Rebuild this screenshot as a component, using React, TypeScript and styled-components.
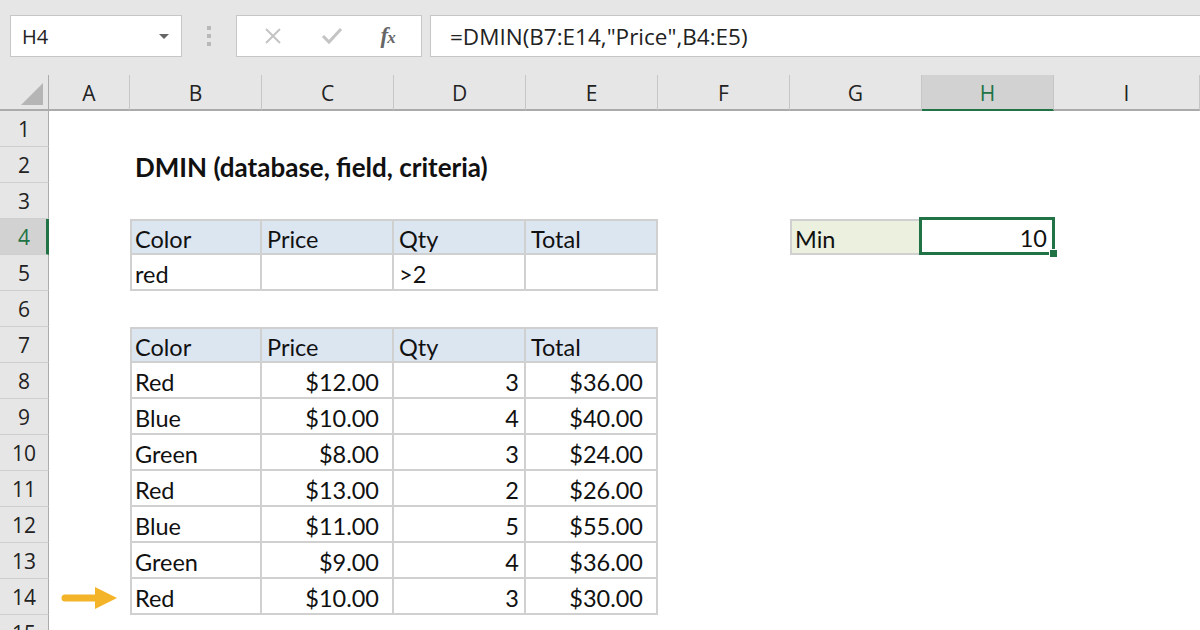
import React from 'react';
import styled, { createGlobalStyle } from 'styled-components';

const GlobalStyle = createGlobalStyle`
  html, body {
    margin: 0;
    padding: 0;
    width: 1200px;
    height: 630px;
    overflow: hidden;
    background: #e6e6e6;
  }
`;

const GREEN = '#217346';
const UI_FONT = '"Open Sans", "Noto Sans", sans-serif';
const CELL_FONT = 'Lato, "Open Sans", sans-serif';

const Page = styled.div`
  width: 1200px;
  height: 630px;
  display: flex;
  flex-direction: column;
  background: #e6e6e6;
  overflow: hidden;
`;

const Toolbar = styled.div`
  flex-shrink: 0;
  height: 75px;
  box-sizing: border-box;
  padding: 15px 0 0 10px;
  display: flex;
  align-items: flex-start;
`;

const Box = styled.div<{ $w?: number }>`
  height: 42px;
  box-sizing: border-box;
  background: #fff;
  border: 1px solid #c6c6c6;
  display: flex;
  align-items: center;
  ${(p) => (p.$w ? `width: ${p.$w}px;` : 'flex: 1;')}
`;

const NameBox = styled(Box)`
  justify-content: space-between;
  padding: 0 12px 0 11px;
  font-family: ${UI_FONT};
  font-size: 20px;
  color: #222;
`;

const Caret = styled.span`
  width: 0;
  height: 0;
  border-left: 5px solid transparent;
  border-right: 5px solid transparent;
  border-top: 5px solid #666;
`;

const Grip = styled.div`
  width: 54px;
  height: 42px;
  display: flex;
  flex-direction: column;
  align-items: center;
  justify-content: center;
  gap: 4px;
  & > i {
    width: 4px;
    height: 4px;
    background: #b9b9b9;
  }
`;

const FxBox = styled(Box)`
  justify-content: space-around;
  padding: 0 8px;
  margin-right: 8px;
`;

const FxLabel = styled.span`
  font-family: "Liberation Serif", serif;
  font-style: italic;
  font-weight: bold;
  font-size: 23px;
  color: #666;
  letter-spacing: -1px;
  & > small {
    font-size: 17px;
  }
`;

const FormulaBox = styled(Box)`
  border-right: none;
  padding-left: 19px;
  font-family: ${UI_FONT};
  font-size: 22.5px;
  color: #222;
`;

const Sheet = styled.div`
  flex: 1;
  min-height: 0;
  display: grid;
  grid-template-columns: 49px 81px repeat(7, 132px) 1fr;
  grid-template-rows: 36px;
  grid-auto-rows: 36px;
  background: #fff;
`;

const Corner = styled.div`
  background: #e6e6e6;
  border-right: 1px solid #ababab;
  border-bottom: 2px solid #ababab;
  box-sizing: border-box;
  display: flex;
  align-items: flex-end;
  justify-content: flex-end;
  padding: 0 5px 4px 0;
`;

const Triangle = styled.span`
  width: 0;
  height: 0;
  border-left: 22px solid transparent;
  border-bottom: 22px solid #b5b5b5;
`;

const ColHead = styled.div<{ $sel?: boolean }>`
  box-sizing: border-box;
  background: ${(p) => (p.$sel ? '#d2d2d2' : '#e6e6e6')};
  border-right: 1px solid #c6c6c6;
  border-bottom: 2px solid ${(p) => (p.$sel ? GREEN : '#ababab')};
  display: flex;
  align-items: center;
  justify-content: center;
  padding-top: 2px;
  font-family: ${UI_FONT};
  font-size: 21px;
  color: ${(p) => (p.$sel ? GREEN : '#222')};
`;

const RowHead = styled.div<{ $sel?: boolean }>`
  box-sizing: border-box;
  background: ${(p) => (p.$sel ? '#d2d2d2' : '#e6e6e6')};
  border-bottom: 1px solid #cfcfcf;
  border-right: ${(p) => (p.$sel ? `3px solid ${GREEN}` : '1px solid #ababab')};
  display: flex;
  align-items: center;
  justify-content: center;
  padding-left: ${(p) => (p.$sel ? '2px' : '0')};
  font-family: ${UI_FONT};
  font-size: 21px;
  color: ${(p) => (p.$sel ? GREEN : '#222')};
`;

type Kind = 'plain' | 'title' | 'head' | 'body' | 'money' | 'num' | 'label' | 'active';

type CellSpec = { v?: string; k?: Kind; top?: boolean; left?: boolean; arrow?: boolean };

const fills: Record<string, string> = {
  head: '#dce6f1',
  label: '#ebf1de',
};

const Cell = styled.div<{ $k: Kind; $top?: boolean; $left?: boolean }>`
  position: relative;
  box-sizing: border-box;
  display: flex;
  align-items: center;
  padding-top: 3px;
  white-space: nowrap;
  overflow: visible;
  font-family: ${CELL_FONT};
  font-size: 23.5px;
  color: #111;
  background: ${(p) => fills[p.$k] || 'transparent'};
  justify-content: ${(p) => (p.$k === 'money' || p.$k === 'num' || p.$k === 'active' ? 'flex-end' : 'flex-start')};
  padding-left: ${(p) => (p.$left ? '3px' : '5px')};
  padding-right: ${(p) => (p.$k === 'money' ? '13px' : '5px')};
  ${(p) =>
    p.$k !== 'plain' && p.$k !== 'title'
      ? `border-right: 2px solid #d0d0d0; border-bottom: 2px solid #d0d0d0;`
      : ''}
  ${(p) => (p.$top ? 'border-top: 2px solid #d0d0d0;' : '')}
  ${(p) => (p.$left ? 'border-left: 2px solid #d0d0d0;' : '')}
  ${(p) => (p.$k === 'title' ? 'font-weight: 700; font-size: 26px; z-index: 1; padding-left: 5px;' : '')}
`;

const Selection = styled.span`
  position: absolute;
  left: -3px;
  top: -2px;
  right: -3px;
  bottom: -2px;
  border: 3px solid ${GREEN};
  pointer-events: none;
`;

const Handle = styled.span`
  position: absolute;
  right: -6px;
  bottom: -6px;
  width: 7px;
  height: 7px;
  background: ${GREEN};
  border: 1px solid #fff;
`;

const ArrowWrap = styled.div`
  display: flex;
  align-items: center;
  justify-content: center;
  padding-top: 1px;
`;

const Arrow = () => (
  <svg width="58" height="26" viewBox="0 0 58 26">
    <line x1="4" y1="13" x2="38" y2="13" stroke="#f4b429" strokeWidth="7" strokeLinecap="round" />
    <polygon points="34,2 56,13 34,24" fill="#f4b429" />
  </svg>
);

const cols = ['A', 'B', 'C', 'D', 'E', 'F', 'G', 'H', 'I'];

const data: { row: number; cells: Record<string, CellSpec> }[] = [];

const hdr = (top: boolean) => ({
  B: { v: 'Color', k: 'head' as Kind, top, left: true },
  C: { v: 'Price', k: 'head' as Kind, top },
  D: { v: 'Qty', k: 'head' as Kind, top },
  E: { v: 'Total', k: 'head' as Kind, top },
});

const records: [string, string, string, string][] = [
  ['Red', '$12.00', '3', '$36.00'],
  ['Blue', '$10.00', '4', '$40.00'],
  ['Green', '$8.00', '3', '$24.00'],
  ['Red', '$13.00', '2', '$26.00'],
  ['Blue', '$11.00', '5', '$55.00'],
  ['Green', '$9.00', '4', '$36.00'],
  ['Red', '$10.00', '3', '$30.00'],
];

data.push({ row: 1, cells: {} });
data.push({ row: 2, cells: { B: { v: 'DMIN (database, field, criteria)', k: 'title' } } });
data.push({ row: 3, cells: {} });
data.push({
  row: 4,
  cells: {
    ...hdr(true),
    G: { v: 'Min', k: 'label', top: true, left: true },
    H: { v: '10', k: 'active' },
  },
});
data.push({
  row: 5,
  cells: {
    B: { v: 'red', k: 'body', left: true },
    C: { v: '', k: 'body' },
    D: { v: '>2', k: 'body' },
    E: { v: '', k: 'body' },
  },
});
data.push({ row: 6, cells: {} });
data.push({ row: 7, cells: hdr(true) });
records.forEach((r, i) => {
  const cells: Record<string, CellSpec> = {
    B: { v: r[0], k: 'body', left: true },
    C: { v: r[1], k: 'money' },
    D: { v: r[2], k: 'num' },
    E: { v: r[3], k: 'money' },
  };
  if (i === records.length - 1) cells.A = { arrow: true };
  data.push({ row: 8 + i, cells });
});
data.push({ row: 15, cells: {} });

const App: React.FC = () => {
  return (
    <Page>
      <GlobalStyle />
      <Toolbar>
        <NameBox $w={172}>
          <span>H4</span>
          <Caret />
        </NameBox>
        <Grip>
          <i />
          <i />
          <i />
        </Grip>
        <FxBox $w={186}>
          <svg width="20" height="20" viewBox="0 0 20 20">
            <path d="M3 3 L17 17 M17 3 L3 17" stroke="#c4c4c4" strokeWidth="2" fill="none" />
          </svg>
          <svg width="24" height="20" viewBox="0 0 24 20">
            <path d="M3 10 L9 16 L21 3" stroke="#c4c4c4" strokeWidth="3" fill="none" />
          </svg>
          <FxLabel>
            f<small>x</small>
          </FxLabel>
        </FxBox>
        <FormulaBox>=DMIN(B7:E14,"Price",B4:E5)</FormulaBox>
      </Toolbar>
      <Sheet>
        <Corner>
          <Triangle />
        </Corner>
        {cols.map((c) => (
          <ColHead key={c} $sel={c === 'H'}>
            {c}
          </ColHead>
        ))}
        {data.map(({ row, cells }) => (
          <React.Fragment key={row}>
            <RowHead $sel={row === 4}>{row}</RowHead>
            {cols.map((c) => {
              const spec = cells[c];
              if (spec?.arrow) {
                return (
                  <ArrowWrap key={c}>
                    <Arrow />
                  </ArrowWrap>
                );
              }
              const k = spec?.k ?? 'plain';
              return (
                <Cell key={c} $k={k} $top={spec?.top} $left={spec?.left}>
                  {spec?.v}
                  {k === 'active' && (
                    <Selection>
                      <Handle />
                    </Selection>
                  )}
                </Cell>
              );
            })}
          </React.Fragment>
        ))}
      </Sheet>
    </Page>
  );
};

export default App;
